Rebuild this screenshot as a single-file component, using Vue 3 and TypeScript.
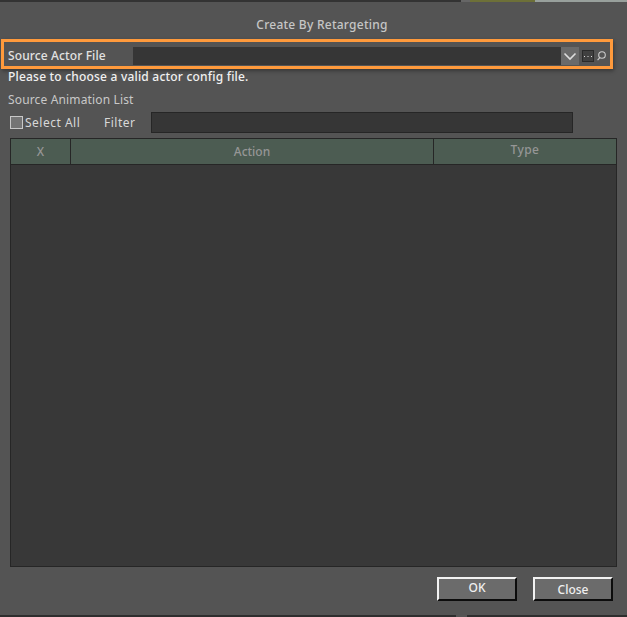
<script setup lang="ts">
const columns = [
  { label: 'X', cls: 'col-x' },
  { label: 'Action', cls: 'col-action' },
  { label: 'Type', cls: 'col-type' },
]
</script>

<template>
  <div class="dialog">
    <div class="top-strip">
      <span class="seg dark"></span><span class="seg grey"></span><span class="seg olive"></span><span class="seg pale"></span>
    </div>
    <h1 class="title">Create By Retargeting</h1>
    <div class="source-row">
      <span class="source-label">Source Actor File</span>
      <div class="source-input">
        <button class="drop" aria-label="Open">
          <svg width="14" height="9" viewBox="0 0 14 9"><path d="M1.500 1.500 7 7l5.500-5.500" fill="none" stroke="#ddd" stroke-width="1.600" /></svg>
        </button>
      </div>
      <button class="dots" aria-label="Browse">
        <svg width="10" height="10" viewBox="0 0 10 10"><path d="M1 5.500h1M4.500 5.500h1M8 5.500h1" stroke="#ddd" stroke-width="1" /></svg>
      </button>
      <svg class="search" width="9" height="12" viewBox="0 0 9 12"><circle cx="5" cy="5" r="3.300" fill="none" stroke="#ccc" stroke-width="1.100" /><path d="M2.600 7.800 .6 10.200" stroke="#ccc" stroke-width="1.100" /></svg>
    </div>
    <p class="hint">Please to choose a valid actor config file.</p>
    <p class="list-label">Source Animation List</p>
    <div class="filter-row">
      <label class="select-all"><span class="box"></span>Select All</label>
      <span class="filter-label">Filter</span>
      <div class="filter-input"></div>
    </div>
    <div class="table">
      <div class="thead">
        <div v-for="c in columns" :key="c.label" class="th" :class="c.cls">{{ c.label }}</div>
      </div>
    </div>
    <div class="footer">
      <button class="btn">OK</button>
      <button class="btn close">Close</button>
    </div>
    <div class="bottom-strip"><span class="tab"></span></div>
  </div>
</template>

<style scoped>
.dialog {
  box-sizing: border-box;
  width: 627px;
  height: 617px;
  display: flex;
  flex-direction: column;
  background: #545454;
  font-family: "Noto Sans", sans-serif;
  font-size: 12px;
  color: #cfcfcf;
  position: relative;
}
.top-strip {
  display: flex;
  height: 2px;
}
.seg.dark { width: 461px; background: #333; }
.seg.grey { width: 9px; background: #666; }
.seg.olive { width: 65px; background: #6d7038; }
.seg.pale { flex: 1; background: #98a09c; }
.title {
  margin: 14px 0 0;
  height: 23px;
  line-height: 17px;
  font-size: 12px;
  font-weight: 500;
  letter-spacing: 0.25px;
  text-align: center;
  padding-left: 17px;
  color: #c6c6c6;
}
.source-row {
  box-sizing: border-box;
  width: 612px;
  height: 30px;
  margin: 0 0 0 1px;
  display: flex;
  align-items: center;
  border: 3px solid #ff9a3c;
  box-shadow: 1px 2px 4px rgba(0, 0, 0, 0.35);
  padding-left: 4px;
}
.source-label {
  width: 125px;
  flex: none;
  color: #e2e2e2;
  font-weight: 500;
  letter-spacing: 0.12px;
  margin-top: 3px;
}
.source-input {
  flex: 1;
  height: 18px;
  align-self: flex-end;
  margin-bottom: 1px;
  display: flex;
  justify-content: flex-end;
  background: #363636;
}
.drop {
  width: 18px;
  height: 18px;
  padding: 0;
  border: 0;
  background: #6a6a6a;
  display: flex;
  align-items: center;
  justify-content: center;
}
.dots {
  box-sizing: border-box;
  width: 12px;
  height: 12px;
  margin: 3px 0 0 3px;
  padding: 0;
  border: 1px solid #2a2a2a;
  background: #404040;
  display: flex;
  align-items: center;
  justify-content: center;
}
.search {
  margin: 3px 4px 0 3px;
  flex: none;
}
.hint {
  margin: 0 0 0 8px;
  line-height: 16px;
  font-weight: 500;
  letter-spacing: 0.2px;
  color: #f0f0f0;
}
.list-label {
  margin: 7px 0 0 8px;
  line-height: 16px;
  letter-spacing: 0.15px;
  color: #c8c8c8;
}
.filter-row {
  display: flex;
  align-items: center;
  height: 21px;
  margin: 4px 0 0 10px;
}
.select-all {
  display: flex;
  align-items: center;
  width: 94px;
  letter-spacing: 0.5px;
  color: #d8d8d8;
}
.box {
  box-sizing: border-box;
  width: 13px;
  height: 13px;
  margin-right: 2px;
  background: #757575;
  border: 1px solid #c8c8c8;
}
.filter-label {
  width: 47px;
  letter-spacing: 0.5px;
  color: #d8d8d8;
}
.filter-input {
  box-sizing: border-box;
  width: 422px;
  height: 21px;
  background: #363636;
  border: 1px solid #262626;
}
.table {
  box-sizing: border-box;
  width: 607px;
  height: 429px;
  margin: 5px 0 0 10px;
  background: #383838;
  border: 1px solid #262626;
}
.thead {
  display: flex;
  height: 25px;
  border-bottom: 1px solid #262626;
}
.th {
  box-sizing: border-box;
  background: #4c5c52;
  color: #969696;
  text-align: center;
  line-height: 26px;
  font-weight: 500;
  border-right: 1px solid #262626;
}
.col-x { width: 60px; }
.col-action { width: 363px; }
.col-type { flex: 1; border-right: 0; line-height: 22px; letter-spacing: 0.4px; }
.footer {
  display: flex;
  justify-content: flex-end;
  gap: 16px;
  margin: 10px 14px 0 0;
}
.btn {
  box-sizing: border-box;
  width: 80px;
  height: 24px;
  padding: 0 0 2px;
  background: #6b6b6b;
  color: #f0f0f0;
  border: 2px solid;
  border-color: #f2f2f2 #0c0c0c #0c0c0c #f2f2f2;
  font: 500 12px/18px "Noto Sans", sans-serif;
}
.close { padding: 1px 0 0; }
.bottom-strip {
  position: absolute;
  left: 0;
  right: 0;
  bottom: 0;
  height: 2px;
  background: #2e2e2e;
}
.tab {
  display: block;
  width: 11px;
  height: 2px;
  margin-left: 456px;
  background: #555;
}
</style>

<style>
html, body { margin: 0; background: #545454; }
</style>
